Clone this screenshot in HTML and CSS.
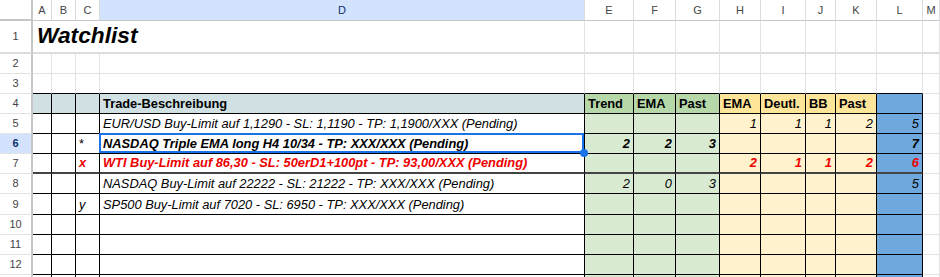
FILE: index.html
```html
<!DOCTYPE html>
<html lang="de">
<head>
    <meta charset="UTF-8">
    <title>Watchlist</title>
    <link rel="stylesheet" href="styles.css">
</head>
<body>
    <div class="sheet">
        <!-- Spaltenköpfe -->
        <div class="row hdr">
            <div class="c corner"></div>
            <div class="c">A</div>
            <div class="c">B</div>
            <div class="c">C</div>
            <div class="c active">D</div>
            <div class="c">E</div>
            <div class="c">F</div>
            <div class="c">G</div>
            <div class="c">H</div>
            <div class="c">I</div>
            <div class="c">J</div>
            <div class="c">K</div>
            <div class="c">L</div>
            <div class="c">M</div>
        </div>

        <div class="row r1">
            <div class="c rh">1</div>
            <div class="c title">Watchlist</div>
            <div class="c"></div><div class="c"></div><div class="c"></div><div class="c"></div>
            <div class="c"></div><div class="c"></div><div class="c"></div><div class="c"></div>
            <div class="c"></div>
        </div>

        <div class="row">
            <div class="c rh">2</div>
            <div class="c"></div><div class="c"></div><div class="c"></div><div class="c"></div>
            <div class="c"></div><div class="c"></div><div class="c"></div><div class="c"></div>
            <div class="c"></div><div class="c"></div><div class="c"></div><div class="c"></div>
            <div class="c"></div>
        </div>

        <div class="row">
            <div class="c rh">3</div>
            <div class="c top"></div><div class="c top"></div><div class="c top"></div><div class="c top"></div>
            <div class="c top"></div><div class="c top"></div><div class="c top"></div><div class="c top"></div>
            <div class="c top"></div><div class="c top"></div><div class="c top"></div><div class="c top"></div>
            <div class="c"></div>
        </div>

        <!-- Tabellenkopf -->
        <div class="row head">
            <div class="c rh">4</div>
            <div class="c t desc-h"></div>
            <div class="c t desc-h"></div>
            <div class="c t desc-h"></div>
            <div class="c t desc-h">Trade-Beschreibung</div>
            <div class="c t green-h">Trend</div>
            <div class="c t green-h">EMA</div>
            <div class="c t green-h">Past</div>
            <div class="c t yellow-h">EMA</div>
            <div class="c t yellow-h">Deutl.</div>
            <div class="c t yellow-h">BB</div>
            <div class="c t yellow-h">Past</div>
            <div class="c t blue"></div>
            <div class="c"></div>
        </div>

        <div class="row it">
            <div class="c rh">5</div>
            <div class="c t"></div>
            <div class="c t"></div>
            <div class="c t"></div>
            <div class="c t">EUR/USD Buy-Limit auf 1,1290 - SL: 1,1190 - TP: 1,1900/XXX (Pending)</div>
            <div class="c t green"></div>
            <div class="c t green"></div>
            <div class="c t green"></div>
            <div class="c t yellow n">1</div>
            <div class="c t yellow n">1</div>
            <div class="c t yellow n">1</div>
            <div class="c t yellow n">2</div>
            <div class="c t blue n">5</div>
            <div class="c"></div>
        </div>

        <div class="row it strong">
            <div class="c rh active">6</div>
            <div class="c t"></div>
            <div class="c t"></div>
            <div class="c t plain">*</div>
            <div class="c t selected">NASDAQ Triple EMA long H4 10/34 - TP: XXX/XXX (Pending)</div>
            <div class="c t green n">2</div>
            <div class="c t green n">2</div>
            <div class="c t green n">3</div>
            <div class="c t yellow"></div>
            <div class="c t yellow"></div>
            <div class="c t yellow"></div>
            <div class="c t yellow"></div>
            <div class="c t blue n">7</div>
            <div class="c"></div>
        </div>

        <div class="row it strong red r7">
            <div class="c rh">7</div>
            <div class="c t"></div>
            <div class="c t"></div>
            <div class="c t">x</div>
            <div class="c t">WTI Buy-Limit auf 86,30 - SL: 50erD1+100pt - TP: 93,00/XXX (Pending)</div>
            <div class="c t green"></div>
            <div class="c t green"></div>
            <div class="c t green"></div>
            <div class="c t yellow n">2</div>
            <div class="c t yellow n">1</div>
            <div class="c t yellow n">1</div>
            <div class="c t yellow n">2</div>
            <div class="c t blue n">6</div>
            <div class="c"></div>
        </div>

        <div class="row it">
            <div class="c rh">8</div>
            <div class="c t"></div>
            <div class="c t"></div>
            <div class="c t"></div>
            <div class="c t">NASDAQ Buy-Limit auf 22222 - SL: 21222 - TP: XXX/XXX (Pending)</div>
            <div class="c t green n">2</div>
            <div class="c t green n">0</div>
            <div class="c t green n">3</div>
            <div class="c t yellow"></div>
            <div class="c t yellow"></div>
            <div class="c t yellow"></div>
            <div class="c t yellow"></div>
            <div class="c t blue n">5</div>
            <div class="c"></div>
        </div>

        <div class="row it r9">
            <div class="c rh">9</div>
            <div class="c t"></div>
            <div class="c t"></div>
            <div class="c t">y</div>
            <div class="c t">SP500 Buy-Limit auf 7020 - SL: 6950 - TP: XXX/XXX (Pending)</div>
            <div class="c t green"></div>
            <div class="c t green"></div>
            <div class="c t green"></div>
            <div class="c t yellow"></div>
            <div class="c t yellow"></div>
            <div class="c t yellow"></div>
            <div class="c t yellow"></div>
            <div class="c t blue"></div>
            <div class="c"></div>
        </div>

        <div class="row">
            <div class="c rh">10</div>
            <div class="c t"></div><div class="c t"></div><div class="c t"></div><div class="c t"></div>
            <div class="c t green"></div><div class="c t green"></div><div class="c t green"></div>
            <div class="c t yellow"></div><div class="c t yellow"></div><div class="c t yellow"></div><div class="c t yellow"></div>
            <div class="c t blue"></div>
            <div class="c"></div>
        </div>

        <div class="row">
            <div class="c rh">11</div>
            <div class="c t"></div><div class="c t"></div><div class="c t"></div><div class="c t"></div>
            <div class="c t green"></div><div class="c t green"></div><div class="c t green"></div>
            <div class="c t yellow"></div><div class="c t yellow"></div><div class="c t yellow"></div><div class="c t yellow"></div>
            <div class="c t blue"></div>
            <div class="c"></div>
        </div>

        <div class="row">
            <div class="c rh">12</div>
            <div class="c t"></div><div class="c t"></div><div class="c t"></div><div class="c t"></div>
            <div class="c t green"></div><div class="c t green"></div><div class="c t green"></div>
            <div class="c t yellow"></div><div class="c t yellow"></div><div class="c t yellow"></div><div class="c t yellow"></div>
            <div class="c t blue"></div>
            <div class="c"></div>
        </div>

        <!-- Zeile 13 ist nur angeschnitten sichtbar -->
        <div class="row">
            <div class="c rh"></div>
            <div class="c t"></div><div class="c t"></div><div class="c t"></div><div class="c t"></div>
            <div class="c t green"></div><div class="c t green"></div><div class="c t green"></div>
            <div class="c t yellow"></div><div class="c t yellow"></div><div class="c t yellow"></div><div class="c t yellow"></div>
            <div class="c t blue"></div>
            <div class="c"></div>
        </div>
    </div>
</body>
</html>
```

FILE: styles.css
```css
body {
    margin: 0;
    font-family: 'Liberation Sans', Arial, sans-serif;
    background-color: #fff;
    overflow: hidden;
}

.sheet {
    width: 940px;
    height: 277px;
    overflow: hidden;
}

.row {
    display: grid;
    grid-template-columns: 33px 19px 24px 24px 485px 49px 42px 44px 41px 45px 30px 41px 46px 1fr;
    height: 20px;
}

.c {
    box-sizing: border-box;
    min-width: 0;
    display: flex;
    align-items: flex-end;
    padding: 0 3px 2px;
    border-right: 1px solid #e2e2e2;
    border-bottom: 1px solid #e2e2e2;
    font-size: 12.85px;
    line-height: 15px;
    color: #000;
    white-space: nowrap;
    overflow: hidden;
}

/* Spalten- und Zeilenköpfe */
.hdr {
    height: 21px;
}

.hdr .c {
    justify-content: center;
    align-items: center;
    padding: 0;
    font-size: 11px;
    color: #444;
    border-right-color: #dadce0;
    border-bottom-color: #c4c7c5;
}

.hdr .corner {
    border-right: 2px solid #c4c7c5;
    border-bottom: 2px solid #c4c7c5;
}

.rh {
    justify-content: center;
    align-items: center;
    padding: 0;
    font-size: 11px;
    color: #444;
    border-right: 2px solid #c4c7c5;
}

.c.active {
    background-color: #d3e3fd;
    color: #0b2f6b;
}

.rh.active {
    font-weight: bold;
}

/* Zeile 1 mit Titel */
.r1 {
    height: 33px;
}

.r1 .c {
    border-bottom: 2px solid #dadce0;
}

.title {
    grid-column: span 4;
    padding: 0 4px 3px;
    font-size: 22.7px;
    line-height: 28px;
    font-weight: bold;
    font-style: italic;
}

.r9 {
    height: 21px;
}

/* Tabelle */
.top {
    border-bottom-color: #000;
}

.c.t {
    border-right-color: #000;
    border-bottom-color: #000;
}

.r7 .c.t {
    border-bottom: 2px solid #444;
}

.head .c.t {
    font-weight: bold;
}

.desc-h {
    background-color: #d0e0e3;
}

.green-h {
    background-color: #b6d7a8;
}

.yellow-h {
    background-color: #ffe599;
}

.green {
    background-color: #d9ead3;
}

.yellow {
    background-color: #fff2cc;
}

.blue {
    background-color: #6fa8dc;
}

.it .c.t {
    font-style: italic;
}

.strong .c.t {
    font-weight: bold;
}

.red .c.t {
    color: #e00;
}

.it .c.plain {
    font-style: normal;
    font-weight: normal;
}

.n {
    justify-content: flex-end;
}

/* Ausgewählte Zelle D6 */
.selected {
    position: relative;
    overflow: visible;
}

.selected::before {
    content: '';
    position: absolute;
    top: -1px;
    left: -1px;
    right: 0;
    bottom: 0;
    border: 2px solid #1a73e8;
}

.selected::after {
    content: '';
    position: absolute;
    right: -4px;
    bottom: -4px;
    width: 8px;
    height: 8px;
    border-radius: 50%;
    background-color: #1a73e8;
}
```
